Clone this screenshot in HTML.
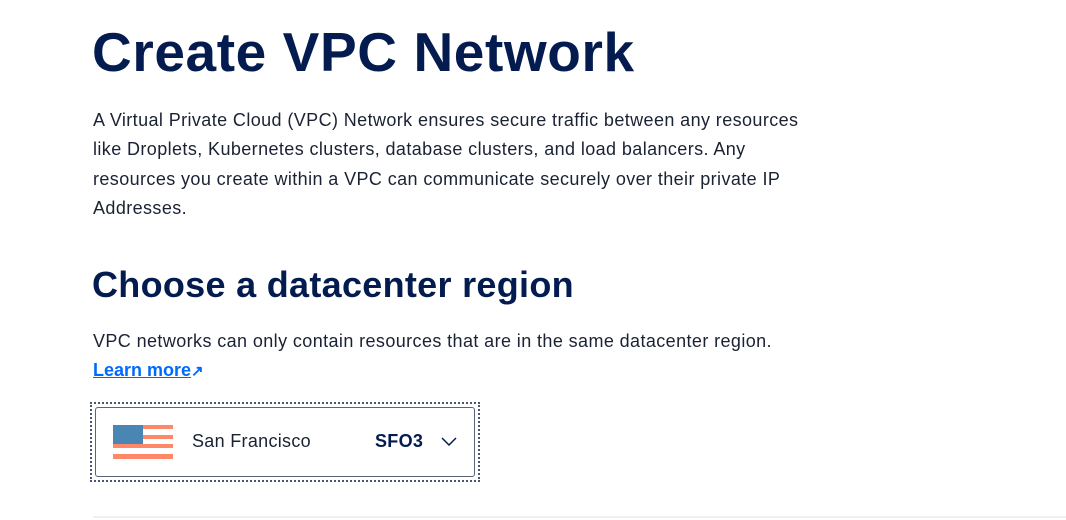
<!DOCTYPE html><html><head><style>
body{margin:0;background:#fff;width:1066px;height:520px;overflow:hidden;font-family:"Liberation Sans",sans-serif;color:#031b4e}
h1{position:absolute;left:92px;top:16px;margin:0;font-size:55px;font-weight:700;letter-spacing:0.6px;line-height:72px}
p{margin:0;position:absolute;left:93px;font-size:18px;line-height:29.3px;color:#1a2233;letter-spacing:0.4px}
h2{position:absolute;left:92px;top:262px;margin:0;font-size:36px;font-weight:700;line-height:46px;letter-spacing:0.3px}
a{color:#0069ff;font-weight:700;letter-spacing:0}
.sel{position:absolute;left:90px;top:402px;width:390px;height:80px;border:2px dotted #4a5572;box-sizing:border-box}
.in{position:absolute;left:3px;top:3px;right:3px;bottom:3px;border:1px solid #5a6478;border-radius:3px}
hr{position:absolute;left:93px;top:516px;width:973px;margin:0;border:0;border-top:2px solid #eef0f2}
</style></head><body>
<h1>Create VPC Network</h1>
<p style="top:106px;width:720px">A Virtual Private Cloud (VPC) Network ensures secure traffic between any resources like Droplets, Kubernetes clusters, database clusters, and load balancers. Any resources you create within a VPC can communicate securely over their private IP Addresses.</p>
<h2>Choose a datacenter region</h2>
<p style="top:327px">VPC networks can only contain resources that are in the same datacenter region.<br><a href="#">Learn more</a><span style="color:#0069ff;font-weight:700;font-size:15px">&#8599;</span></p>
<div class="sel"><div class="in"></div>
<svg style="position:absolute;left:21px;top:21px" width="60" height="34">
<rect x="0" y="0" width="60" height="34" fill="#fff"/>
<rect y="0" width="60" height="4" fill="#ff8868"/><rect y="10" width="60" height="4" fill="#ff8868"/><rect y="19" width="60" height="4" fill="#ff8868"/><rect y="29" width="60" height="5" fill="#ff8868"/>
<rect x="0" y="0" width="30" height="19" fill="#4a86b4"/></svg>
<span style="position:absolute;left:100px;top:27px;font-size:18px;color:#1a2233;letter-spacing:0.3px">San Francisco</span>
<span style="position:absolute;left:283px;top:27px;font-size:18px;font-weight:700;letter-spacing:0.3px">SFO3</span>
<svg style="position:absolute;left:349px;top:33px" width="16" height="10"><path d="M1 1L8 8L15 1" fill="none" stroke="#031b4e" stroke-width="1.5"/></svg>
</div>
<hr>
</body></html>
